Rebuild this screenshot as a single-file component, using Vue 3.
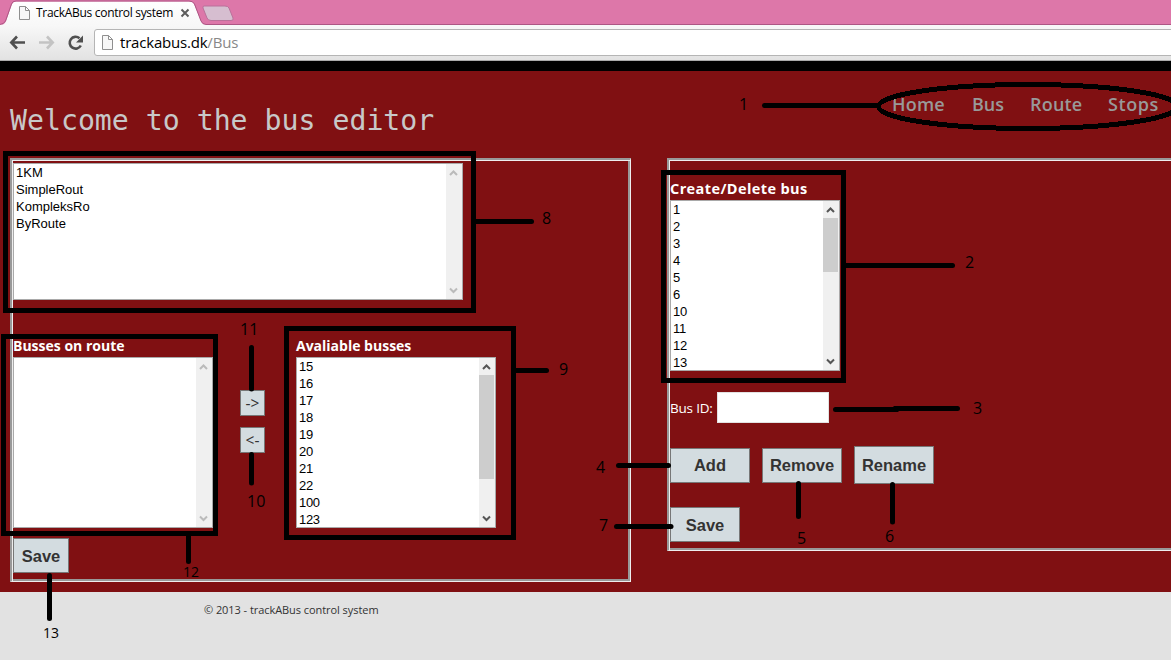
<script setup>
const routes = ['1KM', 'SimpleRout', 'KompleksRo', 'ByRoute']
const available = [15, 16, 17, 18, 19, 20, 21, 22, 100, 123]
const buses = [1, 2, 3, 4, 5, 6, 10, 11, 12, 13]
const nav = ['Home', 'Bus', 'Route', 'Stops']

const frames = [
  { x: 3, y: 151, w: 473, h: 162 },
  { x: 1, y: 334, w: 217, h: 202 },
  { x: 284, y: 326, w: 232, h: 214 },
  { x: 661, y: 170, w: 185, h: 213 },
]
const lines = [
  'M764.500 105.500H877', 'M846 265.500H952.500', 'M835.500 409.500H896V408.500H957.500', 'M618.500 465.500H668.500',
  'M798.500 483.500V516.500', 'M892.500 484.500V522', 'M616.500 526.500H671', 'M476 221.500H531.500', 'M516 370.500H546.500',
  'M251.500 454.500V483', 'M251.500 347.500V389', 'M188.500 536V561.500', 'M49.500 575.500V618.500',
]
const labels = [
  { t: '1', x: 739, y: 110, s: 16 }, { t: '2', x: 965, y: 268, s: 16 }, { t: '3', x: 973, y: 414, s: 16 },
  { t: '4', x: 596, y: 473, s: 16 }, { t: '5', x: 797, y: 544, s: 16 }, { t: '6', x: 885, y: 542, s: 16 },
  { t: '7', x: 599, y: 531, s: 16 }, { t: '8', x: 542, y: 224, s: 16 }, { t: '9', x: 559, y: 375, s: 16 },
  { t: '10', x: 247, y: 507, s: 16 }, { t: '11', x: 240, y: 335, s: 16 },
  { t: '12', x: 183, y: 577, s: 14 }, { t: '13', x: 43, y: 638, s: 14 },
]
</script>

<template>
  <div class="page">
    <header class="browser">
      <svg class="tabs" width="1171" height="25" viewBox="0 0 1171 25">
        <defs>
          <linearGradient id="tab" x1="0" y1="0" x2="0" y2="1">
            <stop offset="0" stop-color="#fff" /><stop offset="1" stop-color="#f7f7f7" />
          </linearGradient>
        </defs>
        <path d="M0 24.500H3Q5 24 6 21L12 4Q13 1.500 16 1.500H189Q193 1.500 194 4L201 21Q202 24.500 206 24.500H1171V26H0Z" fill="url(#tab)" />
        <path d="M0 24.500Q4 24 5.500 21L11.500 4Q12.500 1 16 1H189Q193 1 194.500 4L201 21Q202.500 24.500 206 24.500H1171" fill="none" stroke="#ad5684" />
        <path d="M204 6H225Q228 6 229 8L233 18Q234 20.500 231 20.500H211Q208 20.500 207 18L203 8Q202.500 6 204 6Z" fill="#d6bed0" stroke="#b9719a" />
        <path d="M19.500 6.500H25.500L29.500 10.500V19.500H19.500Z M25.500 6.500V10.500H29.500" fill="#f7f7f7" stroke="#8f8f8f" />
        <path d="M181.500 9.500L188.500 16.500M188.500 9.500L181.500 16.500" stroke="#5c5c5c" stroke-width="2" />
      </svg>
      <span class="tab-title">TrackABus control system</span>
      <div class="toolbar">
        <svg class="tools" width="94" height="35" viewBox="0 0 94 35">
          <g fill="none" stroke-width="2.600">
            <path d="M25 17.500H12M17 11.500L11.300 17.500L17 23.500" stroke="#505050" />
            <path d="M39 17.500H52M47 11.500L52.700 17.500L47 23.500" stroke="#c3c3c3" />
            <path d="M80.800 20.500A5.900 5.900 0 1 1 79.500 13.300" stroke="#505050" />
          </g>
          <path d="M83 10.500V17.500H76Z" fill="#505050" />
        </svg>
        <div class="address">
          <svg width="14" height="18" viewBox="0 0 14 18">
            <path d="M1.500 1.500H7.500L11.500 5.500V15.500H1.500Z M7.500 1.500V5.500H11.500" fill="#f7f7f7" stroke="#8f8f8f" />
          </svg>
          <span class="url">trackabus.dk<i>/Bus</i></span>
        </div>
      </div>
    </header>

    <main class="content">
      <div class="top">
        <h1>Welcome to the bus editor</h1>
        <nav><a v-for="n in nav" :key="n" :class="n.toLowerCase()">{{ n }}</a></nav>
      </div>

      <div class="panels">
        <section class="panel left">
          <div class="list routes">
            <ul><li v-for="r in routes" :key="r">{{ r }}</li></ul>
            <div class="bar off">
              <svg width="15" height="17" viewBox="0 0 15 17"><path d="M4 11L7.500 7.500L11 11" /></svg>
              <svg width="15" height="17" viewBox="0 0 15 17"><path d="M4 6.500L7.500 10L11 6.500" /></svg>
            </div>
          </div>
          <div class="transfer">
            <div class="col">
              <h2 class="h-on">Busses on route</h2>
              <div class="list">
                <ul></ul>
                <div class="bar off">
                  <svg width="15" height="17" viewBox="0 0 15 17"><path d="M4 11L7.500 7.500L11 11" /></svg>
                  <svg width="15" height="17" viewBox="0 0 15 17"><path d="M4 6.500L7.500 10L11 6.500" /></svg>
                </div>
              </div>
            </div>
            <div class="arrows">
              <button>-&gt;</button>
              <button>&lt;-</button>
            </div>
            <div class="col">
              <h2 class="h-av">Avaliable busses</h2>
              <div class="list numbers">
                <ul><li v-for="b in available" :key="b">{{ b }}</li></ul>
                <div class="bar">
                  <svg width="15" height="17" viewBox="0 0 15 17"><path d="M4 11L7.500 7.500L11 11" /></svg>
                  <div class="thumb tall"></div>
                  <svg width="15" height="17" viewBox="0 0 15 17"><path d="M4 6.500L7.500 10L11 6.500" /></svg>
                </div>
              </div>
            </div>
          </div>
          <button class="big save-left">Save</button>
        </section>

        <section class="panel right">
          <h2 class="h-cr">Create/Delete bus</h2>
          <div class="list narrow numbers">
            <ul><li v-for="b in buses" :key="b">{{ b }}</li></ul>
            <div class="bar">
              <svg width="15" height="17" viewBox="0 0 15 17"><path d="M4 11L7.500 7.500L11 11" /></svg>
              <div class="thumb"></div>
              <svg width="15" height="17" viewBox="0 0 15 17"><path d="M4 6.500L7.500 10L11 6.500" /></svg>
            </div>
          </div>
          <div class="field"><label>Bus ID:</label><input type="text" /></div>
          <div class="actions">
            <button class="big">Add</button>
            <button class="big">Remove</button>
            <button class="big rename">Rename</button>
          </div>
          <button class="big save-right">Save</button>
        </section>
      </div>
    </main>

    <footer><span>© 2013 - trackABus control system</span></footer>

    <svg class="notes" width="1171" height="660" viewBox="0 0 1171 660">
      <g fill="none" stroke="#000" stroke-width="5">
        <rect v-for="f in frames" :key="f.x" :x="f.x + 2.5" :y="f.y + 2.5" :width="f.w - 5" :height="f.h - 5" />
        <ellipse cx="1028" cy="106.500" rx="149.500" ry="22" shape-rendering="crispEdges" />
        <path v-for="l in lines" :key="l" :d="l" stroke-linecap="round" />
      </g>
      <text v-for="l in labels" :key="l.t" :x="l.x" :y="l.y" :font-size="l.s">{{ l.t }}</text>
    </svg>
  </div>
</template>

<style>
body { margin: 0; overflow: hidden; }
</style>

<style scoped>
.page { position: relative; width: 1171px; height: 660px; overflow: hidden; display: flex; flex-direction: column; background: #e2e2e2; font-family: "Open Sans", "Noto Sans", sans-serif; }
.browser { position: relative; height: 61px; flex: none; background: #dd77a9; box-sizing: border-box; }
.tabs { display: block; }
.tab-title { position: absolute; left: 36px; top: 4px; font: 12px/18px "Open Sans", sans-serif; letter-spacing: -0.3px; color: #000; white-space: nowrap; }
.toolbar { height: 36px; box-sizing: border-box; display: flex; background: linear-gradient(#f8f8f8, #e2e2e2); border-bottom: 1px solid #aaa; }
.tools { flex: none; }
.address { width: 1090px; flex: none; height: 27px; margin-top: 4px; box-sizing: border-box; border: 1px solid #b5b5b5; border-radius: 3px; background: #fff; display: flex; align-items: center; padding-left: 6px; }
.url { margin-left: 5px; padding-bottom: 2px; font-size: 15px; letter-spacing: -0.2px; color: #000; }
.url i { font-style: normal; color: #888; }
.content { height: 531px; flex: none; box-sizing: border-box; background: #801012; border-top: 10px solid #000; }
.top { height: 87px; display: flex; justify-content: space-between; }
h1 { margin: 29px 0 0 10px; font: 400 28.200px/42px "DejaVu Sans Mono", monospace; color: #c8c8c8; white-space: nowrap; }
nav { display: flex; flex: none; width: 279px; margin-top: 20px; font-size: 18px; font-weight: 600; line-height: 26px; color: #999; }
nav a { flex: none; }
.home { width: 80px; letter-spacing: 0.2px; } .bus { width: 58px; } .route { width: 78px; letter-spacing: 0.2px; }
.stops { letter-spacing: 0.6px; }
.panels { display: flex; align-items: flex-start; padding-left: 10px; gap: 36px; }
.panel { box-sizing: border-box; flex: none; border: 2px solid #999; border-right: 1px solid #eee; border-bottom: 1px solid #eee; box-shadow: inset 1px 1px 0 #eee, inset -2px -2px 0 #999; }
.left { width: 621px; height: 424px; padding: 3px 0 0 1px; }
.right { width: 600px; height: 393px; padding: 19px 0 0 1px; }
.list { width: 200px; height: 171px; box-sizing: border-box; border: 1px solid #a9a9a9; background: #fff; display: flex; overflow: hidden; }
.list ul { flex: 1; margin: 0; padding: 0 0 0 2px; list-style: none; font: 13px/17px "Liberation Sans", Arial, sans-serif; color: #000; }
.list li { height: 17px; }
.numbers li { letter-spacing: -0.3px; }
.routes { width: 450px; height: 137px; }
.narrow { width: 170px; }
.bar { width: 16px; flex: none; background: #f0f0f0; display: flex; flex-direction: column; }
.bar svg { flex: none; }
.bar svg:last-child { margin-top: auto; }
.bar path { fill: none; stroke: #555; stroke-width: 2; }
.off path { stroke: #bbb; }
.thumb { width: 15px; height: 54px; background: #cdcdcd; }
.tall { height: 104px; }
.transfer { display: flex; margin-top: 36px; }
h2 { margin: 0; height: 21px; font-size: 14px; font-weight: 700; line-height: 20px; color: #fff; white-space: nowrap; }
.h-cr { font-size: 14.500px; letter-spacing: 0.4px; }
.arrows { width: 25px; margin: 54px 31px 0 27px; display: flex; flex-direction: column; gap: 11px; }
button { box-sizing: border-box; margin: 0; padding: 0; border: 1px solid #777; background: #d3dce0; color: #333; white-space: nowrap; }
.arrows button { width: 25px; height: 26px; font: 15.500px/22px "Open Sans", sans-serif; }
.big { display: block; width: 80px; height: 35px; font: 700 16.500px/32px "Liberation Sans", Arial, sans-serif; }
.save-left { width: 56px; margin-top: 10px; }
.field { display: flex; align-items: center; height: 31px; margin-top: 21px; color: #fff; font-size: 13.500px; }
.field label { width: 47px; white-space: nowrap; letter-spacing: -0.2px; }
.field input { width: 112px; height: 31px; box-sizing: border-box; border: 1px solid #e2e2e2; background: #fff; margin: 0; }
.actions { display: flex; align-items: center; gap: 12px; height: 38px; margin-top: 23px; }
.rename { height: 38px; }
.save-right { width: 70px; margin-top: 23px; }
footer { flex: 1; padding: 9px 0 0 204px; font-size: 11px; line-height: 18px; letter-spacing: -0.06px; color: #333; }
.notes { position: absolute; left: 0; top: 0; font-family: "Open Sans", sans-serif; }
</style>
